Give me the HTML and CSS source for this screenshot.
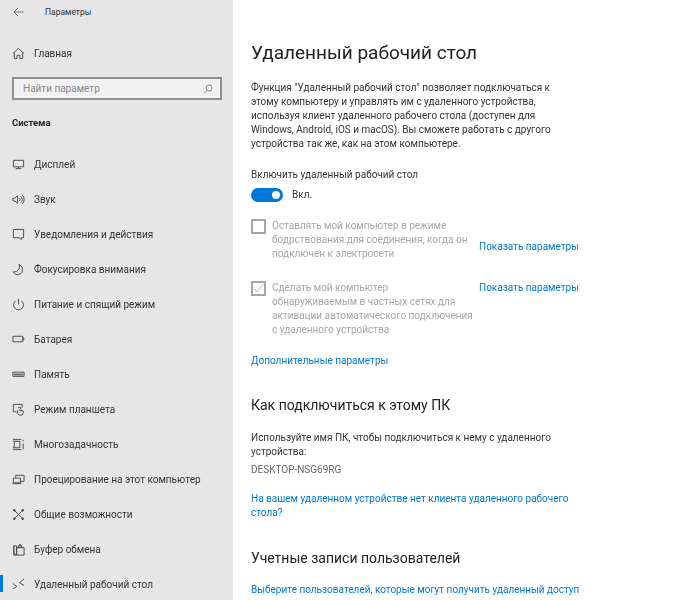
FILE: index.html
```html
<!DOCTYPE html>
<html lang="ru">
<head>
<meta charset="utf-8">
<title>Параметры</title>
<link rel="stylesheet" href="styles.css">
</head>
<body>
<div class="window">
  <aside class="sidebar">
    <div class="titlebar">
      <svg class="back" viewBox="0 0 11 10"><path d="M10.5 5H1M5 1L1 5l4 4"/></svg>
      <span class="app-title">Параметры</span>
    </div>
    <div class="nav-item home">
      <svg class="icon" viewBox="0 0 14 14"><path d="M1 7l6-5.500L13 7M2.500 6v6.500h3V9h3v3.500h3V6"/></svg>
      <span>Главная</span>
    </div>
    <div class="search">
      <span>Найти параметр</span>
      <svg class="search-icon" viewBox="0 0 10 10"><circle cx="6" cy="4" r="3"/><path d="M4 6.200L1 9.500"/></svg>
    </div>
    <div class="section">Система</div>
    <nav class="nav">
      <div class="nav-item">
        <svg class="icon" viewBox="0 0 14 14"><path d="M1.500 2.500h11v7h-11zM7 9.500v2M4 11.500h6"/></svg>
        <span>Дисплей</span>
      </div>
      <div class="nav-item">
        <svg class="icon" viewBox="0 0 14 14"><path d="M1 5.500h2L6 3v8L3 8.500H1zM8 5.500a2 2 0 0 1 0 3M9.500 3.500a5 5 0 0 1 0 7M11 2a7 7 0 0 1 0 10"/></svg>
        <span>Звук</span>
      </div>
      <div class="nav-item">
        <svg class="icon" viewBox="0 0 14 14"><path d="M1.500 1.500h11v9H10v2l-2-2H1.500z"/></svg>
        <span>Уведомления и действия</span>
      </div>
      <div class="nav-item">
        <svg class="icon" viewBox="0 0 14 14"><path d="M7.500 1.500a5.500 5.500 0 0 1-6 8 5.500 5.500 0 0 0 6 3 5.800 5.800 0 0 0 0-11z"/></svg>
        <span>Фокусировка внимания</span>
      </div>
      <div class="nav-item">
        <svg class="icon" viewBox="0 0 14 14"><path d="M7 1v6M4 3a5.300 5.300 0 1 0 6 0"/></svg>
        <span>Питание и спящий режим</span>
      </div>
      <div class="nav-item">
        <svg class="icon" viewBox="0 0 14 14"><path d="M1 3.500h10.500v6H1zM11.500 5.500h1.200v2h-1.200"/></svg>
        <span>Батарея</span>
      </div>
      <div class="nav-item">
        <svg class="icon" viewBox="0 0 14 14"><path d="M1 4.500h12v4.500H1z"/><path class="thick" d="M2 7h10"/></svg>
        <span>Память</span>
      </div>
      <div class="nav-item">
        <svg class="icon" viewBox="0 0 14 14"><path d="M5 9.500H1.500v-8h9.500V5M6.500 5h3v2M6 8v3.500l2 1.500h3l1-2V8.500L7.500 7.500"/></svg>
        <span>Режим планшета</span>
      </div>
      <div class="nav-item">
        <svg class="icon" viewBox="0 0 14 14"><path d="M1 1.500h9M1 12.500h9M2.500 3.500h6v7h-6zM12 2v1.500M12 6v6M1 3.500h1.500M1 10.500h1.500"/></svg>
        <span>Многозадачность</span>
      </div>
      <div class="nav-item">
        <svg class="icon" viewBox="0 0 14 14"><path d="M4 5V2.500h9V9h-4M1.500 5.500h7.500v5H1.500zM.5 11.500h9.500"/></svg>
        <span>Проецирование на этот компьютер</span>
      </div>
      <div class="nav-item">
        <svg class="icon" viewBox="0 0 14 14"><path d="M3 3l8 8M11 3l-8 8"/><circle class="solid" cx="2.500" cy="2.500" r="1.300"/><circle class="solid" cx="11.500" cy="2.500" r="1.300"/><circle class="solid" cx="2.500" cy="11.500" r="1.300"/><circle class="solid" cx="11.500" cy="11.500" r="1.300"/></svg>
        <span>Общие возможности</span>
      </div>
      <div class="nav-item">
        <svg class="icon" viewBox="0 0 14 14"><path d="M2 3h3v9H2zM5 5h8v8H5V5M7 3h3.500v2H7zM8 3V1.500h1.500V3M2 3v10h3"/></svg>
        <span>Буфер обмена</span>
      </div>
      <div class="nav-item active">
        <svg class="icon" viewBox="0 0 14 14"><path d="M1 6l4 3-4 3M13 1L8 5l5 3"/></svg>
        <span>Удаленный рабочий стол</span>
      </div>
    </nav>
  </aside>
  <main class="content">
    <h1>Удаленный рабочий стол</h1>
    <p class="intro">Функция "Удаленный рабочий стол" позволяет подключаться к<br>этому компьютеру и управлять им с удаленного устройства,<br>используя клиент удаленного рабочего стола (доступен для<br>Windows, Android, iOS и macOS). Вы сможете работать с другого<br>устройства так же, как на этом компьютере.</p>
    <div class="label">Включить удаленный рабочий стол</div>
    <div class="toggle-row">
      <span class="toggle"><span class="knob"></span></span>
      <span>Вкл.</span>
    </div>
    <div class="option first">
      <span class="check"></span>
      <span class="option-text">Оставлять мой компьютер в режиме<br>бодрствования для соединения, когда он<br>подключен к электросети</span>
      <a class="link bottom">Показать параметры</a>
    </div>
    <div class="option second">
      <span class="check"><svg viewBox="0 0 14 14"><path d="M1.500 7.500l3.500 4 8-10"/></svg></span>
      <span class="option-text">Сделать мой компьютер<br>обнаруживаемым в частных сетях для<br>активации автоматического подключения<br>с удаленного устройства</span>
      <a class="link">Показать параметры</a>
    </div>
    <a class="link more">Дополнительные параметры</a>
    <h2 class="connect">Как подключиться к этому ПК</h2>
    <p class="connect-text">Используйте имя ПК, чтобы подключиться к нему с удаленного<br>устройства:</p>
    <p class="pc-name">DESKTOP-NSG69RG</p>
    <a class="link client">На вашем удаленном устройстве нет клиента удаленного рабочего<br>стола?</a>
    <h2 class="accounts">Учетные записи пользователей</h2>
    <a class="link users">Выберите пользователей, которые могут получить удаленный доступ</a>
  </main>
</div>
</body>
</html>
```
FILE: styles.css
```css
* { box-sizing: border-box; }
html, body { margin: 0; height: 100%; overflow: hidden; background: #fff; }
body { font-family: Roboto, "Open Sans", sans-serif; font-size: 10px; line-height: 14px; color: #333; }
.window { display: flex; width: 690px; height: 600px; overflow: hidden; filter: blur(0.35px); }
.sidebar { flex: none; width: 233px; background: #e6e6e6; }
.titlebar { display: flex; align-items: center; height: 24px; padding-left: 13px; }
.back { width: 11px; height: 10px; fill: none; stroke: #555; stroke-width: 0.8; }
.app-title { margin-left: 21px; font-size: 8.5px; }
svg { display: block; }
.icon { flex: none; width: 13px; height: 13px; margin-right: 9px; fill: none; stroke: #444; stroke-width: 1; }
.icon .solid { fill: #444; stroke: none; }
.icon .thick { stroke-width: 2; stroke: #666; }
.nav-item { position: relative; display: flex; align-items: center; height: 35px; padding-left: 12px; }
.home { margin-top: 12px; }
.search { display: flex; align-items: center; justify-content: space-between; width: 210px; height: 23px; margin: 6px 0 0 12px; padding: 0 7px 0 9px; background: #f2f2f2; border: 2px solid #8f8f8f; color: #888; }
.search-icon { width: 10px; height: 10px; fill: none; stroke: #888; stroke-width: 1; }
.section { margin-top: 16px; padding-left: 12px; font-weight: 700; font-size: 9.5px; color: #222; }
.nav { margin-top: 17px; }
.active::before { content: ""; position: absolute; left: 0; top: 8px; width: 3px; height: 17px; background: #0078d7; }
.content { flex: 1; padding: 39px 0 0 18px; }
h1 { margin: 0; font-size: 19px; line-height: 27px; font-weight: 400; color: #222; }
h2 { margin: 0; font-size: 14px; line-height: 20px; font-weight: 400; color: #222; }
p { margin: 0; }
.intro { margin-top: 15px; }
.label { margin-top: 17px; }
.toggle-row { display: flex; align-items: center; gap: 9px; margin-top: 6px; }
.toggle { display: flex; align-items: center; justify-content: flex-end; width: 32px; height: 14px; padding-right: 3px; border-radius: 7px; background: #0078d7; }
.knob { width: 8px; height: 8px; border-radius: 50%; background: #fff; }
.option { display: flex; width: 330px; color: #a6a6a6; align-items: flex-start; }
.first { margin-top: 17px; }
.second { margin-top: 20px; }
.check { flex: none; width: 15px; height: 15px; margin-top: 0; border: 2px solid #a6a6a6; }
.check svg { width: 11px; height: 11px; fill: none; stroke: #a6a6a6; stroke-width: 1; }
.option-text { flex: none; width: 203px; margin-left: 6px; white-space: nowrap; }
.link { display: block; color: #0078d7; white-space: nowrap; }
.option .link { margin-left: 4px; flex: none; }
.bottom { align-self: flex-end; margin-bottom: 1px; }
.first .bottom { margin-bottom: 7px; }
.more { margin-top: 17px; }
.connect { margin-top: 27px; }
.connect-text { margin-top: 16px; }
.pc-name { margin-top: 4px; color: #666; }
.client { margin-top: 15px; }
.accounts { margin-top: 28px; }
.users { margin-top: 15px; }
```
